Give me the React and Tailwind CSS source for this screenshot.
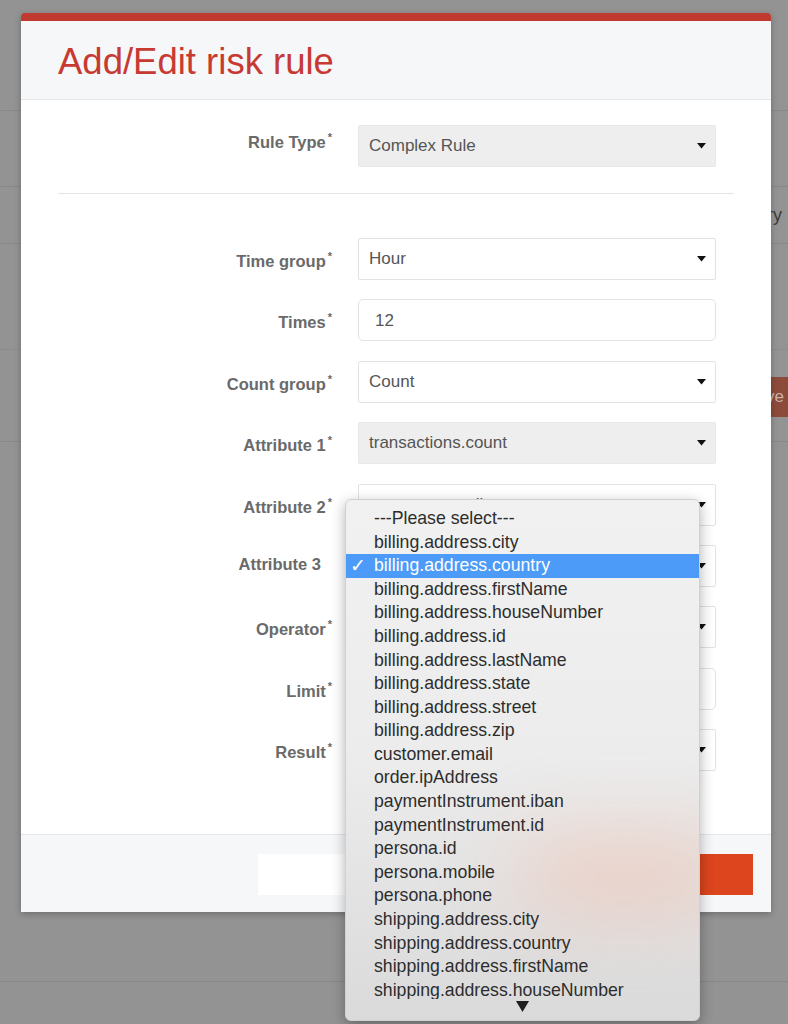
import React from "react";

const options = [
  "---Please select---",
  "billing.address.city",
  "billing.address.country",
  "billing.address.firstName",
  "billing.address.houseNumber",
  "billing.address.id",
  "billing.address.lastName",
  "billing.address.state",
  "billing.address.street",
  "billing.address.zip",
  "customer.email",
  "order.ipAddress",
  "paymentInstrument.iban",
  "paymentInstrument.id",
  "persona.id",
  "persona.mobile",
  "persona.phone",
  "shipping.address.city",
  "shipping.address.country",
  "shipping.address.firstName",
  "shipping.address.houseNumber",
];

const fields = [
  { label: "Time group", value: "Hour", kind: "select", req: true },
  { label: "Times", value: "12", kind: "input", req: true },
  { label: "Count group", value: "Count", kind: "select", req: true },
  { label: "Attribute 1", value: "transactions.count", kind: "disabled", req: true },
  { label: "Attribute 2", value: "customer.email", kind: "select", req: true },
  { label: "Attribute 3", value: "", kind: "select", req: false },
  { label: "Operator", value: "", kind: "select", req: true },
  { label: "Limit", value: "", kind: "input", req: true },
  { label: "Result", value: "", kind: "select", req: true },
];

function Caret() {
  return (
    <svg width="9" height="6" viewBox="0 0 9 6" className="shrink-0">
      <path d="M0 0 L9 0 L4.5 5.5 Z" fill="#111" />
    </svg>
  );
}

function Label({ text, req, top }) {
  const pad = top || (req ? "pt-[11px]" : "pt-[7px]");
  return (
    <div className={`w-[275px] text-right text-[16.5px] font-bold text-[#6a6a6a] ${pad} ${req ? "pr-[1px]" : "pr-[12px]"}`}>
      {text}
      {req && <span className="relative top-[-7px] ml-[2px] text-[11px]">*</span>}
    </div>
  );
}

function Field({ kind, value }) {
  if (kind === "input") {
    return (
      <div className="flex h-[42px] w-[358px] items-center rounded-[5px] border border-[#e2e2e2] bg-white pl-[16px] text-[17px] text-[#555]">
        {value}
      </div>
    );
  }
  const bg = kind === "disabled" ? "bg-[#eeeeee] border-[#e8e8e8]" : "bg-white border-[#e2e2e2]";
  return (
    <div className={`flex h-[42px] w-[358px] items-center justify-between rounded-[2px] border pl-[10px] pr-[9px] text-[17px] text-[#555] ${bg}`}>
      <span>{value}</span>
      <Caret />
    </div>
  );
}

export default function App() {
  return (
    <div className="relative h-[1024px] w-[788px] overflow-hidden bg-[#939393] font-['Liberation_Sans',Arial,sans-serif]">
      {/* page behind the backdrop */}
      <div className="flex flex-col">
        <div className="h-[111px] border-b border-[#878787]" />
        <div className="h-[76px] border-b border-[#878787]" />
        <div className="flex h-[57px] items-center justify-end border-b border-[#878787] pr-[6px] text-[18px] text-[#3c3c3c]">
          Country
        </div>
        <div className="flex h-[198px] flex-col border-b border-[#878787]">
          <div className="mt-[105px] border-b border-dotted border-[#858585]" />
          <div className="mt-[27px] flex justify-end">
            <div className="-mr-[4px] flex h-[40px] items-center rounded-[2px] bg-[#8c4a3a] px-[8px] text-[17px] text-[#c9b3ad]">
              Save
            </div>
          </div>
        </div>
        <div className="h-[540px] border-b border-[#878787]" />
      </div>

      {/* modal */}
      <div className="absolute left-[21px] top-[13px] w-[750px] overflow-hidden rounded-t-[4px] border-t-[8px] border-[#c13a30] bg-white shadow-[0_2px_6px_rgba(0,0,0,0.25)]">
        <div className="flex h-[79px] items-center border-b border-[#e4e6e9] bg-[#f6f7f9] pl-[37px]">
          <h1 className="pt-[4px] text-[36.5px] leading-none text-[#c73a31]">Add/Edit risk rule</h1>
        </div>

        <div className="px-[37px] pb-[63px] pt-[25px]">
          <div className="flex items-start gap-[25px]">
            <Label text="Rule Type" req top="pt-[5px]" />
            <Field kind="disabled" value="Complex Rule" />
          </div>
          <div className="mt-[26px] border-t border-[#e4e4e4]" />
          <div className="mt-[44px] flex flex-col gap-[19.4px]">
            {fields.map((f) => (
              <div key={f.label} className="flex items-start gap-[25px]">
                <Label text={f.label} req={f.req} />
                <Field kind={f.kind} value={f.value} />
              </div>
            ))}
          </div>
        </div>

        <div className="flex h-[78px] items-start justify-end gap-[20px] border-t border-[#e4e6e9] bg-[#f6f7f9] pr-[18px] pt-[19px]">
          <div className="h-[41px] w-[252px] bg-white" />
          <div className="h-[41px] w-[223px] bg-[#dc451d]" />
        </div>
      </div>

      {/* open native select menu */}
      <div className="absolute left-[345px] top-[499px] h-[522px] w-[355px] overflow-hidden rounded-[6px] border border-[#d0d0d0] bg-gradient-to-b from-[#f1f1f1] via-[#ececec] to-[#dadada] shadow-[0_4px_14px_rgba(0,0,0,0.3)]">
        <div className="absolute left-[170px] top-[340px] h-[70px] w-[220px] rounded-full bg-[#f6b7a2] opacity-50 blur-2xl" />
        <div className="relative h-[499px] overflow-hidden pt-[7px]">
          {options.map((o, i) => (
            <div
              key={o}
              className={`flex h-[23.6px] items-center text-[17.7px] leading-none ${
                i === 2 ? "bg-[#4d9bf8] text-white" : "text-[#2d2d2d]"
              }`}
            >
              <span className="w-[28px] pl-[4px] font-['DejaVu_Sans',sans-serif] text-[19px] font-bold">{i === 2 ? "✓" : ""}</span>
              <span>{o}</span>
            </div>
          ))}
        </div>
        <div className="relative flex justify-center pt-[2px]">
          <svg width="13" height="11" viewBox="0 0 13 11">
            <path d="M0 0 L13 0 L6.5 11 Z" fill="#1e1e1e" />
          </svg>
        </div>
      </div>
    </div>
  );
}
